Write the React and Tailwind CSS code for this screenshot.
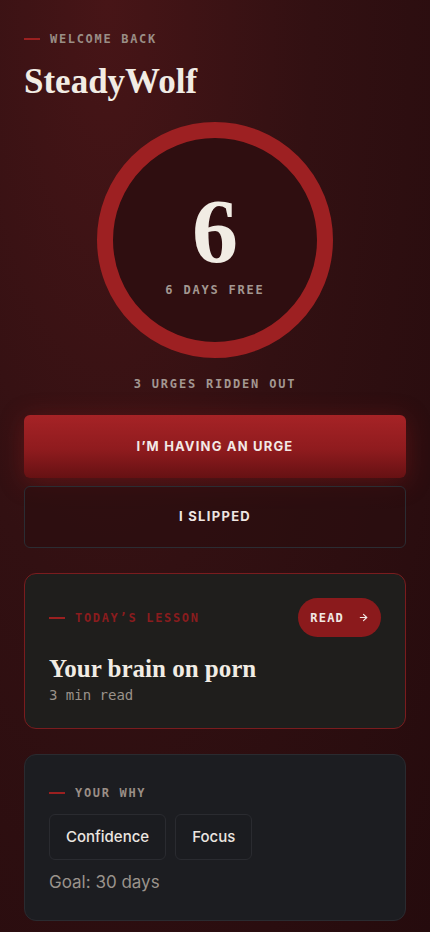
import { ArrowRight } from 'lucide-react'

const MONO = { fontFamily: '"DejaVu Sans Mono", "Liberation Mono", monospace' }
const SERIF = { fontFamily: '"Liberation Serif", "DejaVu Serif", serif' }
const SANS = { fontFamily: 'Inter, "Noto Sans", sans-serif' }

function Eyebrow({ children, tone = 'text-[#9a8e86]' }) {
  return (
    <div className="flex items-center gap-[10px]">
      <span className="block w-4 h-[2px] bg-[#9b2020]" />
      <span className={`text-[12px] tracking-[0.14em] font-bold ${tone}`} style={MONO}>{children}</span>
    </div>
  )
}

function Ring() {
  return (
    <div className="relative w-[236px] h-[236px] mx-auto">
      <svg width="236" height="236" viewBox="0 0 236 236" className="absolute inset-0">
        <circle cx="118" cy="118" r="110" fill="#2f0e10" stroke="#9d2022" strokeWidth="16" />
      </svg>
      <div className="absolute inset-0 flex flex-col items-center justify-center">
        <div className="text-[92px] leading-none font-bold text-[#f1ece4] mt-[4px]" style={SERIF}>6</div>
        <div className="mt-[4px] text-[12px] font-bold tracking-[0.15em] text-[#a39791]" style={MONO}>6 DAYS FREE</div>
      </div>
    </div>
  )
}

export default function App() {
  return (
    <div
      className="min-h-[932px] w-full px-6 pt-[30px] pb-4"
      style={{
        ...SANS,
        background: 'radial-gradient(ellipse at 25% 0%, #471517 0%, #321012 45%, #250b0d 100%)',
      }}
    >
      <Eyebrow>WELCOME BACK</Eyebrow>
      <h1 className="mt-[14px] text-[35px] leading-[40px] font-bold text-[#f1ece4]" style={SERIF}>
        SteadyWolf
      </h1>

      <div className="mt-[20px]">
        <Ring />
      </div>

      <div className="mt-[17px] text-center text-[12px] font-bold tracking-[0.15em] text-[#a39791]" style={MONO}>
        3 URGES RIDDEN OUT
      </div>

      <button
        className="mt-[22px] w-full h-[63px] rounded-md text-[#f3e9e6] text-[13px] font-bold tracking-[0.09em] shadow-[0_4px_24px_rgba(170,30,30,0.35)]"
        style={{ background: 'linear-gradient(180deg, #a62326 0%, #8f1b1e 55%, #661113 100%)' }}
      >
        I’M HAVING AN URGE
      </button>

      <button className="mt-[8px] w-full h-[62px] rounded-md border border-[#2b2d33] bg-[#2a0d0f]/60 text-[#efe6e2] text-[13px] font-bold tracking-[0.1em]">
        I SLIPPED
      </button>

      <div className="mt-[25px] rounded-xl border border-[#7a1c1e] bg-[#1f1e1c] px-[24px] pt-[24px] pb-[22px]">
        <div className="flex items-center justify-between">
          <Eyebrow tone="text-[#8a1c1e]">TODAY’S LESSON</Eyebrow>
          <button className="flex items-center gap-[14px] h-[39px] px-[12px] rounded-full bg-[#8b1a1c] text-[#f1e8e4] text-[12px] font-bold tracking-[0.1em]" style={MONO}>
            READ
            <ArrowRight size={11} strokeWidth={2.5} />
          </button>
        </div>
        <div className="mt-[17px] text-[25px] leading-[30px] font-bold text-[#f1ece4]" style={SERIF}>
          Your brain on porn
        </div>
        <div className="mt-[1px] text-[14px] text-[#9a928a]" style={MONO}>3 min read</div>
      </div>

      <div className="mt-[25px] rounded-xl border border-[#2a2b30] bg-[#1c1d21] px-[24px] pt-[29px] pb-[24px]">
        <Eyebrow>YOUR WHY</Eyebrow>
        <div className="mt-[12px] flex gap-[9px]">
          {['Confidence', 'Focus'].map(w => (
            <div key={w} className="h-[46px] px-4 flex items-center rounded-md border border-[#2a2b30] bg-[#1b1c20] text-[15px] font-medium text-[#ece6e0]">
              {w}
            </div>
          ))}
        </div>
        <div className="mt-[10px] text-[17px] text-[#9a938c]">Goal: 30 days</div>
      </div>
    </div>
  )
}
